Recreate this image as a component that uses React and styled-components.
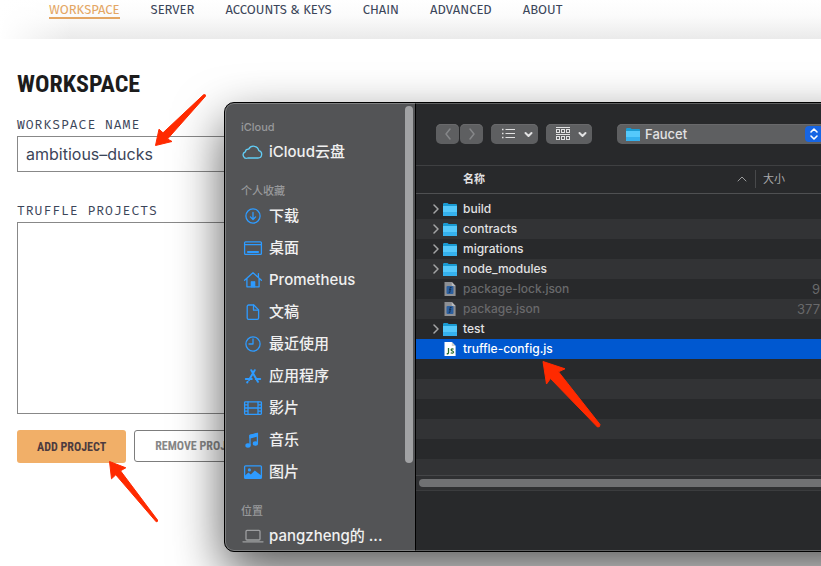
import React from 'react';
import styled, { createGlobalStyle } from 'styled-components';

const GlobalStyle = createGlobalStyle`
  *, *::before, *::after { box-sizing: border-box; }
  body { margin: 0; background: #fff; }
  button, input, select { font: inherit; color: inherit; margin: 0; }
`;

const ui = `Inter, "Noto Sans CJK SC", sans-serif`;
const condensed = `"Roboto Condensed", "Liberation Sans Narrow", "DejaVu Sans Condensed", sans-serif`;

/* ---------- page ---------- */

const Page = styled.div`
  position: relative;
  min-height: 100vh;
  overflow: hidden;
  background: #fff;
`;

const TopBar = styled.header`
  height: 39px;
  background:
    linear-gradient(to right, #fff 0, rgba(255, 255, 255, 0) 72px),
    linear-gradient(to bottom, #fff 0, #fbfbfb 16px, #eaeaea 100%);
`;

const TopNav = styled.nav`
  display: flex;
  gap: 31px;
  padding-left: 49px;
  font: 400 13px/20px "Fira Sans", "Noto Sans", sans-serif;
`;

const TopLink = styled.a`
  height: 19px;
  color: ${(p) => (p.$active ? '#e4a663' : '#3b4559')};
  border-bottom: ${(p) => (p.$active ? '2px solid #e4a663' : '0')};
  text-decoration: none;
  white-space: nowrap;
`;

const Workspace = styled.main`
  display: flex;
  flex-direction: column;
  padding: 31px 17px 0;
`;

const Title = styled.h1`
  margin: 0;
  color: #1c1c1c;
  font: 700 24px/28px ${condensed};
`;

const FieldLabel = styled.label`
  display: block;
  margin-top: ${(p) => p.$gap}px;
  height: 20px;
  color: #3b4559;
  font: 400 13px/18px "Fira Mono", "DejaVu Sans Mono", monospace;
  letter-spacing: 1px;
`;

const NameInput = styled.input`
  width: 100%;
  height: 36px;
  padding: 0 8px;
  border: 1px solid #888;
  border-radius: 0;
  background: #fff;
  color: #3b4559;
  font: 400 16px/20px ${ui};
  outline: none;
`;

const ProjectList = styled.div`
  height: 192px;
  border: 1px solid #888;
`;

const Actions = styled.div`
  display: flex;
  gap: 8px;
  margin-top: 16px;
`;

const ActionButton = styled.button`
  height: ${(p) => (p.$primary ? 33 : 32)}px;
  padding: 0 20px;
  border: ${(p) => (p.$primary ? '0' : '1px solid #7d7d7d')};
  border-radius: 3px;
  background: ${(p) => (p.$primary ? '#f1af68' : '#fff')};
  color: ${(p) => (p.$primary ? '#4d3b3f' : '#888')};
  font: 700 12px/16px ${condensed};
  white-space: nowrap;
`;

/* ---------- file dialog ---------- */

const Dialog = styled.section`
  position: absolute;
  top: 102px;
  left: 224px;
  right: -60px;
  display: flex;
  border: 1px solid #000;
  border-radius: 10px;
  overflow: hidden;
  background: #28292b;
  box-shadow: 0 20px 50px rgba(0, 0, 0, 0.65);
  color: #e2e2e3;
  font: 500 12px/16px ${ui};

  &::after {
    content: '';
    position: absolute;
    inset: 0;
    border: 1px solid rgba(255, 255, 255, 0.26);
    border-radius: 9px;
    pointer-events: none;
  }
`;

const Sidebar = styled.aside`
  display: flex;
  flex: 0 0 191px;
  border-right: 1px solid #000;
  background: #535456;
`;

const Places = styled.nav`
  flex: 1;
  padding-left: 16px;
`;

const PlacesHeading = styled.h2`
  height: 32px;
  margin: 0;
  padding-top: 16px;
  color: #98999b;
  font: 500 11px/16px ${ui};
`;

const Place = styled.a`
  display: flex;
  align-items: center;
  gap: 4px;
  height: 32px;
  padding-top: 2px;
  color: #f0f0f0;
  font: 500 15px/20px ${ui};
  text-decoration: none;
  white-space: nowrap;

  svg { flex: none; }
`;

const SideThumb = styled.div`
  flex: none;
  width: 8px;
  height: 357px;
  margin: 3px 2px 0 0;
  border-radius: 4px;
  background: #a1a2a4;
`;

const Browser = styled.div`
  flex: 1;
  min-width: 0;
  display: flex;
  flex-direction: column;
`;

const Toolbar = styled.div`
  display: flex;
  align-items: center;
  height: 63px;
  padding-left: 20px;
  border-bottom: 1px solid #3f4042;
`;

const ToolButton = styled.button`
  display: flex;
  align-items: center;
  justify-content: center;
  flex: none;
  width: ${(p) => p.$width}px;
  height: 20px;
  margin-right: ${(p) => p.$after}px;
  padding: 0;
  border: 0;
  border-radius: 5px;
  background: #5e5f61;
  box-shadow: inset 0 1px 0 #69696b;
`;

const FolderPicker = styled.label`
  display: flex;
  align-items: center;
  flex: 1;
  height: 20px;
  padding-left: 8px;
  padding-right: 57px;
  border-radius: 5px;
  background: #5e5f61;
  box-shadow: inset 0 1px 0 #69696b;

  select {
    flex: 1;
    min-width: 0;
    height: 20px;
    padding: 0 4px;
    border: 0;
    background: transparent;
    appearance: none;
    font: 500 13px/20px ${ui};
    outline: none;
  }
`;

const PickerArrows = styled.span`
  display: flex;
  align-items: center;
  justify-content: center;
  width: 18px;
  height: 16px;
  border-radius: 4px;
  background: #1765e3;
`;

const FileArea = styled.div`
  height: 309px;
  overflow: hidden;
`;

const FileTable = styled.table`
  width: 100%;
  border-collapse: collapse;
  table-layout: fixed;

  thead tr { border-bottom: 1px solid #4f5052; }
  tbody::before { content: ''; display: block; height: 5px; }
`;

const HeadCell = styled.th`
  width: ${(p) => p.$width || 'auto'};
  height: 27px;
  padding: 0;
  text-align: left;
  color: ${(p) => (p.$sorted ? '#e2e2e3' : '#a9aaab')};
  font-size: 11px;
  font-weight: ${(p) => (p.$sorted ? 700 : 400)};
`;

const HeadLabel = styled.div`
  display: flex;
  align-items: center;
  justify-content: space-between;
  height: 18px;
  padding: ${(p) => (p.$sorted ? '0 8px 0 47px' : '0 0 0 7px')};
  border-left: ${(p) => (p.$sorted ? '0' : '1px solid #48494b')};
`;

const FileRow = styled.tr`
  height: 20px;
  background: ${(p) => (p.$selected ? '#0058d0' : 'transparent')};
  color: ${(p) => (p.$selected ? '#fff' : p.$dim ? '#69696b' : '#e2e2e3')};

  &:nth-child(even) {
    background: ${(p) => (p.$selected ? '#0058d0' : '#323335')};
  }
`;

const Cell = styled.td`
  padding: 0;
  height: 20px;
`;

const SizeCell = styled(Cell)`
  padding-right: 60px;
  text-align: right;
  font-size: 13px;
  font-weight: 400;
`;

const FileName = styled.div`
  display: grid;
  grid-template-columns: 10px 16px auto;
  align-items: center;
  justify-content: start;
  height: 20px;
  padding-left: 16px;

  span { padding-left: 5px; }
`;

const ScrollTrack = styled.div`
  height: 16px;
  padding: 3px 0 3px 3px;
  border-top: 1px solid #454648;
  border-bottom: 1px solid #3b3c3e;
  background: #2f3032;
`;

const ScrollThumb = styled.div`
  height: 8px;
  border-radius: 4px;
  background: #707173;
`;

const Footer = styled.footer`
  flex: 1;
`;

/* ---------- icons ---------- */

const blue = '#2e9bff';

function SideIcon({ color = blue, children }) {
  return (
    <svg width="24" height="20" viewBox="0 0 24 20" fill="none" stroke={color} strokeWidth="1.3" strokeLinecap="round" strokeLinejoin="round" aria-hidden="true">
      {children}
    </svg>
  );
}

const icons = {
  cloud: (
    <SideIcon color="#62cdf5">
      <path d="M6.8 16H17a3.7 3.7 0 0 0 .8-7.3A5.4 5.4 0 0 0 7.7 7.1a3.2 3.2 0 0 0-3.400 2.700A3.300 3.300 0 0 0 6.800 16Z" />
    </SideIcon>
  ),
  download: (
    <SideIcon>
      <circle cx="12" cy="10" r="7.1" />
      <path d="M12 6.4v7M9.4 10.9l2.6 2.6 2.6-2.6" />
    </SideIcon>
  ),
  desktop: (
    <SideIcon>
      <rect x="3.6" y="3.8" width="16.8" height="12.6" rx="1" />
      <path d="M3.6 6.6h16.8" />
      <path d="M7 14h10" strokeWidth="2.2" />
    </SideIcon>
  ),
  home: (
    <SideIcon>
      <path d="M3.6 10.2 12 2.8l8.4 7.4M5.9 8.6v8.2h12.2V8.6M17.4 3.6v3.6" />
      <path d="M10 16.8v-5.3h4v5.3Z" fill={blue} strokeWidth="0.6" />
    </SideIcon>
  ),
  document: (
    <SideIcon>
      <path d="M7.6 3h5.2l4.8 4.9v8a1.4 1.4 0 0 1-1.4 1.4H7.6A1.4 1.4 0 0 1 6.2 15.9V4.4A1.4 1.4 0 0 1 7.6 3Z" />
      <path d="M12.5 3.2v5h4.9" />
    </SideIcon>
  ),
  clock: (
    <SideIcon>
      <circle cx="12" cy="10" r="7.1" />
      <path d="M12 5v5H8" />
    </SideIcon>
  ),
  apps: (
    <SideIcon>
      <path d="M10.3 4.2 16.9 15.8M13.7 4.2 8 14" strokeWidth="2" />
      <path d="M4.8 12.9h6M14.8 12.9h4.4M6.6 15.8l-.4.7" strokeWidth="2" />
    </SideIcon>
  ),
  film: (
    <SideIcon>
      <rect x="3.6" y="3.8" width="16.8" height="12.6" rx="0.8" />
      <path d="M7 3.8v12.6M17 3.8v12.6M7 10h10M3.6 6.9H7M3.6 10H7M3.6 13.2H7M17 6.9h3.4M17 10h3.4M17 13.2h3.4" />
    </SideIcon>
  ),
  music: (
    <SideIcon>
      <path d="M9 15V5.4l7.4-1.9v9.7" />
      <path d="M9 5.4l7.4-1.9v2.4L9 7.8Z" fill={blue} />
      <ellipse cx="7" cy="15.4" rx="2" ry="1.6" fill={blue} />
      <ellipse cx="14.4" cy="13.6" rx="2" ry="1.6" fill={blue} />
    </SideIcon>
  ),
  picture: (
    <SideIcon>
      <rect x="3.6" y="3.8" width="16.8" height="12.6" rx="1" />
      <circle cx="8.4" cy="7.9" r="1.6" fill={blue} stroke="none" />
      <path d="M4 16v-2.4l3.5-3 2.3 1.8 4-4 6.4 5V16Z" fill={blue} stroke="none" />
    </SideIcon>
  ),
  laptop: (
    <SideIcon color="#9d9ea0">
      <rect x="5" y="4.4" width="14" height="9.6" rx="1" />
      <path d="M2 15.8h20" />
    </SideIcon>
  ),
};

function FolderIcon() {
  return (
    <svg width="16" height="16" viewBox="0 0 16 16" aria-hidden="true">
      <path d="M1 3.200Q1 2 2.200 2h3.300l1.200 1H14q1 0 1 1v10q0 1-1 1H2q-1 0-1-1Z" fill="#1a9bd3" />
      <path d="M1 5h14v9q0 1-1 1H2q-1 0-1-1Z" fill="#55c9fb" />
      <path d="M1 11h14v3q0 1-1 1H2q-1 0-1-1Z" fill="#35b1ee" />
    </svg>
  );
}

function ScriptFileIcon({ dim }) {
  return (
    <svg width="16" height="16" viewBox="0 0 16 16" aria-hidden="true">
      <path d="M2.5 1h7.3L13.6 5v10H2.5Z" fill={dim ? '#8e9094' : '#fff'} />
      <path d="M9.8 1v4h3.8Z" fill={dim ? '#b9babd' : '#cfd3cf'} />
      {dim ? (
        <>
          <rect x="4.500" y="5" width="7" height="8" rx="1" fill="#2c5f9e" />
          <path d="M9.5 6.5H8v4.8H6.7M7.2 8.6h2" fill="none" stroke="#16314f" />
        </>
      ) : (
        <path d="M6.5 7v4.8q0 1.2-1.8.9M11.600 8.200c-1.500-.8-3.200.1-2 1.300.9.700 2.200.7 1.900 1.900-.3.900-1.700 1-2.800.4" fill="none" stroke="#276b2c" strokeWidth="1.300" />
      )}
    </svg>
  );
}

function Chevron({ points, width, height, color, weight = 1.5 }) {
  return (
    <svg width={width} height={height} viewBox={`0 0 ${width} ${height}`} fill="none" stroke={color} strokeWidth={weight} strokeLinecap="round" strokeLinejoin="round" aria-hidden="true">
      <polyline points={points} />
    </svg>
  );
}

function ListViewIcon() {
  return (
    <svg width="37" height="16" viewBox="-4 0 37 16" fill="none" stroke="#e2e2e3" aria-hidden="true">
      <path d="M5.500 3.500H15M5.500 7.500H15M5.500 11.500H15" strokeWidth="1.200" />
      <path d="M2 3.500h1.500M2 7.500h1.500M2 11.500h1.500" strokeWidth="1.500" />
      <path d="M25.500 7l3 3 3-3" strokeWidth="2" strokeLinecap="round" strokeLinejoin="round" />
    </svg>
  );
}

function GroupViewIcon() {
  const columns = [2, 7, 12];
  return (
    <svg width="38" height="16" viewBox="-4 0 38 16" fill="none" stroke="#e2e2e3" aria-hidden="true">
      <path d="M2 1.500h14M2 8.500h14" />
      {columns.map((x) => (
        <React.Fragment key={x}>
          <rect x={x + 0.5} y="3.500" width="3" height="3" />
          <rect x={x + 0.5} y="10.500" width="3" height="3" />
        </React.Fragment>
      ))}
      <path d="M25.500 7l3 3 3-3" strokeWidth="2" strokeLinecap="round" strokeLinejoin="round" />
    </svg>
  );
}

/* ---------- annotation arrows ---------- */

const Pointer = styled.svg`
  position: absolute;
  left: ${(p) => p.$left}px;
  top: ${(p) => p.$top}px;
  fill: #ff2a00;
  stroke: #ff2a00;
  stroke-width: 1;
  stroke-linejoin: round;
  pointer-events: none;
`;

/* ---------- data ---------- */

const tabs = ['WORKSPACE', 'SERVER', 'ACCOUNTS & KEYS', 'CHAIN', 'ADVANCED', 'ABOUT'];

const places = [
  { title: 'iCloud', items: [['cloud', 'iCloud云盘']] },
  {
    title: '个人收藏',
    items: [
      ['download', '下载'],
      ['desktop', '桌面'],
      ['home', 'Prometheus'],
      ['document', '文稿'],
      ['clock', '最近使用'],
      ['apps', '应用程序'],
      ['film', '影片'],
      ['music', '音乐'],
      ['picture', '图片'],
    ],
  },
  { title: '位置', items: [['laptop', 'pangzheng的 ...']] },
];

const files = [
  { name: 'build', folder: true },
  { name: 'contracts', folder: true },
  { name: 'migrations', folder: true },
  { name: 'node_modules', folder: true },
  { name: 'package-lock.json', dim: true, size: '9' },
  { name: 'package.json', dim: true, size: '377' },
  { name: 'test', folder: true },
  { name: 'truffle-config.js', selected: true },
];

const emptyRows = [0, 1, 2, 3, 4, 5];

function FileDialog() {
  return (
    <Dialog role="dialog" aria-label="Faucet">
      <Sidebar>
        <Places>
          {places.map((group) => (
            <React.Fragment key={group.title}>
              <PlacesHeading>{group.title}</PlacesHeading>
              {group.items.map(([icon, label]) => (
                <Place key={label} href="#">
                  {icons[icon]}
                  {label}
                </Place>
              ))}
            </React.Fragment>
          ))}
        </Places>
        <SideThumb />
      </Sidebar>

      <Browser>
        <Toolbar>
          <ToolButton type="button" $width={23} $after={1} aria-label="Back">
            <Chevron width={8} height={14} points="6,2 2,7 6,12" color="#858688" />
          </ToolButton>
          <ToolButton type="button" $width={23} $after={8} aria-label="Forward">
            <Chevron width={8} height={14} points="2,2 6,7 2,12" color="#858688" />
          </ToolButton>
          <ToolButton type="button" $width={47} $after={8} aria-label="List view">
            <ListViewIcon />
          </ToolButton>
          <ToolButton type="button" $width={46} $after={25} aria-label="Group items">
            <GroupViewIcon />
          </ToolButton>
          <FolderPicker>
            <FolderIcon />
            <select aria-label="Folder" defaultValue="Faucet">
              <option>Faucet</option>
            </select>
            <PickerArrows>
              <svg width="10" height="14" viewBox="0 0 10 14" fill="none" stroke="#fff" strokeWidth="1.600" strokeLinecap="round" strokeLinejoin="round" aria-hidden="true">
                <path d="M2 5l3-3 3 3M2 9l3 3 3-3" />
              </svg>
            </PickerArrows>
          </FolderPicker>
        </Toolbar>

        <FileArea>
          <FileTable>
            <thead>
              <tr>
                <HeadCell $sorted>
                  <HeadLabel $sorted>
                    名称
                    <Chevron width={10} height={8} points="1,6 5,2 9,6" color="#9a9b9c" weight={1} />
                  </HeadLabel>
                </HeadCell>
                <HeadCell $width="125px">
                  <HeadLabel>大小</HeadLabel>
                </HeadCell>
              </tr>
            </thead>
            <tbody>
              {files.map((file) => (
                <FileRow key={file.name} $dim={file.dim} $selected={file.selected}>
                  <Cell>
                    <FileName>
                      {file.folder ? <Chevron width={8} height={10} points="2,1 6,5 2,9" color="#a4a5a6" /> : <i />}
                      {file.folder ? <FolderIcon /> : <ScriptFileIcon dim={file.dim} />}
                      <span>{file.name}</span>
                    </FileName>
                  </Cell>
                  <SizeCell>{file.size}</SizeCell>
                </FileRow>
              ))}
              {emptyRows.map((n) => (
                <FileRow key={n}>
                  <Cell />
                  <SizeCell />
                </FileRow>
              ))}
            </tbody>
          </FileTable>
        </FileArea>
        <ScrollTrack>
          <ScrollThumb />
        </ScrollTrack>
        <Footer />
      </Browser>
    </Dialog>
  );
}

export default function App() {
  return (
    <Page>
      <GlobalStyle />
      <TopBar>
        <TopNav>
          {tabs.map((tab, i) => (
            <TopLink key={tab} href="#" $active={i === 0}>
              {tab}
            </TopLink>
          ))}
        </TopNav>
      </TopBar>

      <Workspace>
        <Title>WORKSPACE</Title>
        <FieldLabel htmlFor="workspace-name" $gap={18}>WORKSPACE NAME</FieldLabel>
        <NameInput id="workspace-name" defaultValue="ambitious–ducks" />
        <FieldLabel as="div" id="projects-label" $gap={30}>TRUFFLE PROJECTS</FieldLabel>
        <ProjectList role="listbox" aria-labelledby="projects-label" />
        <Actions>
          <ActionButton type="button" $primary>ADD PROJECT</ActionButton>
          <ActionButton type="button">REMOVE PROJECT</ActionButton>
        </Actions>
      </Workspace>

      <FileDialog />

      <Pointer $left={154} $top={92} width="54" height="56" viewBox="0 0 54 56" aria-hidden="true">
        <path d="M1.500 53.500 5 37.200l4 3.600L49.500 2.800Q52 2 51.500 4.200L13.500 47l4.500 2.500Z" />
      </Pointer>
      <Pointer $left={108} $top={460} width="52" height="64" viewBox="0 0 52 64" aria-hidden="true">
        <path d="M1.500 1.500 17.800 7.800l-5.300 3L49.500 60Q50 62 48.200 61.800L7.800 14.800l-4.300 4Z" />
      </Pointer>
      <Pointer $left={541} $top={360} width="62" height="70" viewBox="0 0 62 70" aria-hidden="true">
        <path d="M2 1.500 24 8.800l-6.500 3L59 64.500Q59 67.500 56.500 67L9.500 18.500l-4 5.500Z" />
      </Pointer>
    </Page>
  );
}
